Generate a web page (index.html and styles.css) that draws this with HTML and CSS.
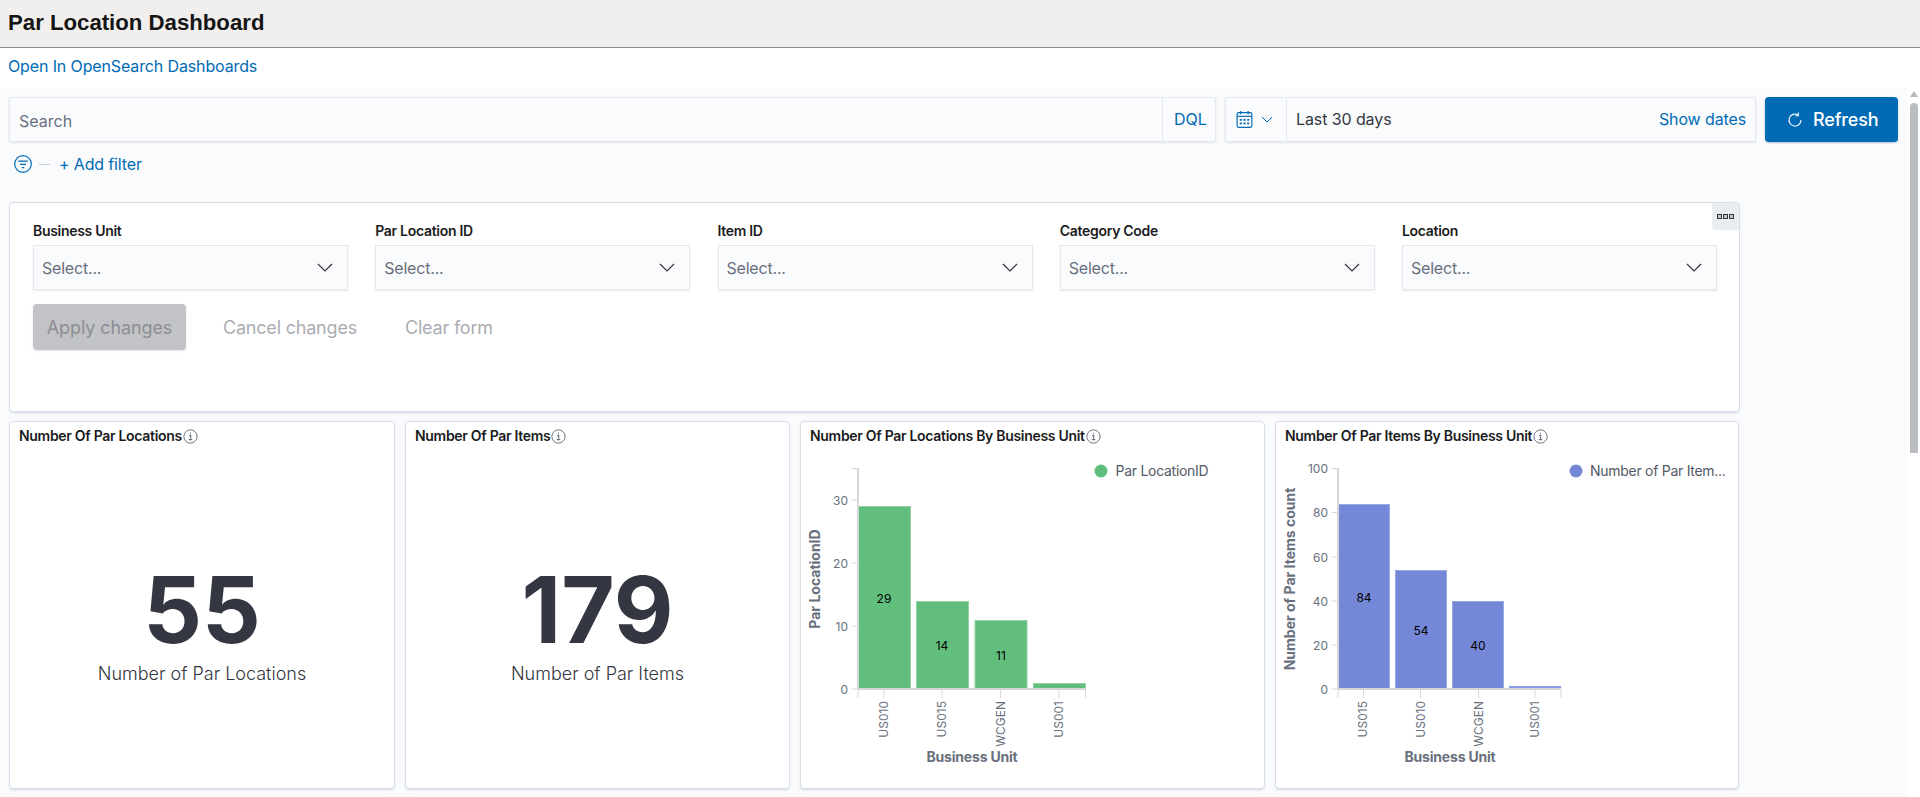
FILE: index.html
```html
<!DOCTYPE html>
<html lang="en">
<head>
<meta charset="utf-8">
<title>Par Location Dashboard</title>
<link rel="stylesheet" href="styles.css">
</head>
<body>
<header class="page-header"><h1 class="page-title">Par Location Dashboard</h1></header>
<div class="link-row"><a class="link" href="#">Open In OpenSearch Dashboards</a></div>
<div class="workspace">
  <main class="main">
    <div class="query-row">
      <div class="search-bar">
        <span class="search-placeholder">Search</span>
        <span class="dql">DQL</span>
      </div>
      <div class="date-picker">
        <div class="date-quick">
          <svg class="icon-cal" viewBox="0 0 16 18" width="17" height="19"><rect x="1" y="2.5" width="14" height="14" rx="1.5" fill="none" stroke="#006bb4" stroke-width="1.1"/><path d="M1 6h14" stroke="#006bb4" stroke-width="1.1"/><path d="M4.5 1v3M11.5 1v3" stroke="#006bb4" stroke-width="1.2"/><path d="M3.5 8.5h2v1.6h-2zM7 8.5h2v1.6H7zM10.5 8.5h2v1.6h-2zM3.5 11.8h2v1.6h-2zM7 11.8h2v1.6H7zM10.5 11.8h2v1.6h-2z" fill="#006bb4"/></svg>
          <svg class="icon-chev-small" viewBox="0 0 12 7" width="12" height="7"><path d="M1 1l5 5 5-5" fill="none" stroke="#006bb4" stroke-width="1"/></svg>
        </div>
        <span class="date-value">Last 30 days</span>
        <span class="show-dates">Show dates</span>
      </div>
      <button class="refresh" type="button">
        <svg viewBox="0 0 16 16" width="16" height="16"><path d="M14 8a6 6 0 1 1-2.9-5.1" fill="none" stroke="#fff" stroke-width="1.1"/><path d="M11.3 .5v3.2H8.3" fill="none" stroke="#fff" stroke-width="1.1"/></svg>
        <span>Refresh</span>
      </button>
    </div>
    <div class="filter-row">
      <svg viewBox="0 0 18 18" width="18" height="18"><circle cx="9" cy="9" r="8.3" fill="none" stroke="#006bb4" stroke-width="1.2"/><path d="M4.2 6.2h9.6M6 9.4h6M7.8 12.6h2.4" stroke="#006bb4" stroke-width="1.2" fill="none"/></svg>
      <span class="filter-dash"></span>
      <a class="link add-filter" href="#">+ Add filter</a>
    </div>

    <section class="panel controls">
      <div class="options-tab"><span class="sq"></span><span class="sq"></span><span class="sq"></span></div>
      <div class="control-grid">
        <div class="control"><label class="control-label">Business Unit</label><div class="select"><span>Select...</span><svg viewBox="0 0 16 9" width="16" height="9"><path d="M1 1l7 7 7-7" fill="none" stroke="#343741" stroke-width="1.2"/></svg></div></div>
        <div class="control"><label class="control-label">Par Location ID</label><div class="select"><span>Select...</span><svg viewBox="0 0 16 9" width="16" height="9"><path d="M1 1l7 7 7-7" fill="none" stroke="#343741" stroke-width="1.2"/></svg></div></div>
        <div class="control"><label class="control-label">Item ID</label><div class="select"><span>Select...</span><svg viewBox="0 0 16 9" width="16" height="9"><path d="M1 1l7 7 7-7" fill="none" stroke="#343741" stroke-width="1.2"/></svg></div></div>
        <div class="control"><label class="control-label">Category Code</label><div class="select"><span>Select...</span><svg viewBox="0 0 16 9" width="16" height="9"><path d="M1 1l7 7 7-7" fill="none" stroke="#343741" stroke-width="1.2"/></svg></div></div>
        <div class="control"><label class="control-label">Location</label><div class="select"><span>Select...</span><svg viewBox="0 0 16 9" width="16" height="9"><path d="M1 1l7 7 7-7" fill="none" stroke="#343741" stroke-width="1.2"/></svg></div></div>
      </div>
      <div class="control-actions">
        <button class="btn-apply" type="button">Apply changes</button>
        <span class="btn-empty cancel">Cancel changes</span>
        <span class="btn-empty clear">Clear form</span>
      </div>
    </section>

    <div class="panel-grid">
      <section class="panel viz">
        <h2 class="viz-title">Number Of Par Locations<svg class="info" viewBox="0 0 14 14" width="15" height="15"><circle cx="7" cy="7" r="6.2" fill="none" stroke="#69707d" stroke-width=".9"/><path d="M5.8 6.2h1.4v3.6M5.4 9.9h3.2M6.9 3.6v1.2" fill="none" stroke="#69707d" stroke-width="1"/></svg></h2>
        <div class="metric"><div class="metric-value">55</div><div class="metric-label">Number of Par Locations</div></div>
      </section>
      <section class="panel viz">
        <h2 class="viz-title">Number Of Par Items<svg class="info" viewBox="0 0 14 14" width="15" height="15"><circle cx="7" cy="7" r="6.2" fill="none" stroke="#69707d" stroke-width=".9"/><path d="M5.8 6.2h1.4v3.6M5.4 9.9h3.2M6.9 3.6v1.2" fill="none" stroke="#69707d" stroke-width="1"/></svg></h2>
        <div class="metric"><div class="metric-value">179</div><div class="metric-label">Number of Par Items</div></div>
      </section>
      <section class="panel viz">
        <h2 class="viz-title">Number Of Par Locations By Business Unit<svg class="info" viewBox="0 0 14 14" width="15" height="15"><circle cx="7" cy="7" r="6.2" fill="none" stroke="#69707d" stroke-width=".9"/><path d="M5.8 6.2h1.4v3.6M5.4 9.9h3.2M6.9 3.6v1.2" fill="none" stroke="#69707d" stroke-width="1"/></svg></h2>
        <svg class="chart" viewBox="801 448 464 340" width="464" height="340">
          <g class="grid-lines">
            <path d="M852 468.5h6M852 500h6M852 563h6M852 626h6M852 689h6"/>
            <path d="M858 698v-9M884 698v-9M942 698v-9M1000.5 698v-9M1059 698v-9M1085.5 698v-9"/>
          </g>
          <rect class="bar green" x="858.5" y="506.5" width="52" height="182"/>
          <rect class="bar green" x="916.5" y="601.5" width="52" height="87"/>
          <rect class="bar green" x="975" y="620.5" width="52" height="68"/>
          <rect class="bar green" x="1033.5" y="683.5" width="52" height="5"/>
          <path class="axis" d="M858 468v221h228"/>
          <text class="tick" x="848" y="504.5" text-anchor="end">30</text>
          <text class="tick" x="848" y="567.5" text-anchor="end">20</text>
          <text class="tick" x="848" y="630.5" text-anchor="end">10</text>
          <text class="tick" x="848" y="693.5" text-anchor="end">0</text>
          <text class="val" x="884" y="603" text-anchor="middle">29</text>
          <text class="val" x="942" y="650" text-anchor="middle">14</text>
          <text class="val" x="1001" y="660" text-anchor="middle">11</text>
          <text class="tick" transform="translate(888 701) rotate(-90)" text-anchor="end">US010</text>
          <text class="tick" transform="translate(946 701) rotate(-90)" text-anchor="end">US015</text>
          <text class="tick" transform="translate(1005 701) rotate(-90)" text-anchor="end">WCGEN</text>
          <text class="tick" transform="translate(1063 701) rotate(-90)" text-anchor="end">US001</text>
          <text class="axis-title x-title" x="972" y="762" text-anchor="middle">Business Unit</text>
          <text class="axis-title" transform="translate(820 579) rotate(-90)" text-anchor="middle">Par LocationID</text>
          <circle class="dot-green" cx="1101" cy="471" r="6.5"/>
          <text class="legend" x="1115.5" y="476">Par LocationID</text>
        </svg>
      </section>
      <section class="panel viz">
        <h2 class="viz-title">Number Of Par Items By Business Unit<svg class="info" viewBox="0 0 14 14" width="15" height="15"><circle cx="7" cy="7" r="6.2" fill="none" stroke="#69707d" stroke-width=".9"/><path d="M5.8 6.2h1.4v3.6M5.4 9.9h3.2M6.9 3.6v1.2" fill="none" stroke="#69707d" stroke-width="1"/></svg></h2>
        <svg class="chart" viewBox="1276 448 463 340" width="463" height="340">
          <g class="grid-lines">
            <path d="M1332 468.5h6M1332 512.5h6M1332 557h6M1332 601h6M1332 645h6M1332 689h6"/>
            <path d="M1338 698v-9M1363.5 698v-9M1420.5 698v-9M1478.5 698v-9M1535 698v-9M1561 698v-9"/>
          </g>
          <rect class="bar blue" x="1338.5" y="504.5" width="51" height="184"/>
          <rect class="bar blue" x="1395.5" y="570.5" width="51" height="118"/>
          <rect class="bar blue" x="1452.5" y="601.5" width="51" height="87"/>
          <rect class="bar-sliver" x="1509" y="686" width="52" height="3"/>
          <path class="axis" d="M1338 468v221h223"/>
          <text class="tick" x="1328" y="473" text-anchor="end">100</text>
          <text class="tick" x="1328" y="517" text-anchor="end">80</text>
          <text class="tick" x="1328" y="561.5" text-anchor="end">60</text>
          <text class="tick" x="1328" y="605.5" text-anchor="end">40</text>
          <text class="tick" x="1328" y="649.5" text-anchor="end">20</text>
          <text class="tick" x="1328" y="693.5" text-anchor="end">0</text>
          <text class="val" x="1364" y="602" text-anchor="middle">84</text>
          <text class="val" x="1421" y="635" text-anchor="middle">54</text>
          <text class="val" x="1478" y="650" text-anchor="middle">40</text>
          <text class="tick" transform="translate(1367 701) rotate(-90)" text-anchor="end">US015</text>
          <text class="tick" transform="translate(1424.5 701) rotate(-90)" text-anchor="end">US010</text>
          <text class="tick" transform="translate(1482.5 701) rotate(-90)" text-anchor="end">WCGEN</text>
          <text class="tick" transform="translate(1539 701) rotate(-90)" text-anchor="end">US001</text>
          <text class="axis-title x-title" x="1450" y="762" text-anchor="middle">Business Unit</text>
          <text class="axis-title" transform="translate(1295 579) rotate(-90)" text-anchor="middle">Number of Par Items count</text>
          <circle class="dot-blue" cx="1576" cy="471" r="6.5"/>
          <text class="legend" x="1590" y="476">Number of Par Item...</text>
        </svg>
      </section>
    </div>
  </main>
  <div class="scrollbar"><span class="scroll-arrow"></span><span class="scroll-thumb"></span></div>
</div>
</body>
</html>
```
FILE: styles.css
```css
* { box-sizing: border-box; }
html, body { margin: 0; height: 100%; overflow: hidden; }
body {
  display: flex;
  flex-direction: column;
  background: #fff;
  font-family: Inter, "Liberation Sans", sans-serif;
  color: #343741;
}
.page-header {
  height: 48px;
  flex: none;
  background: #f1efed;
  border-bottom: 1px solid #8b8b8b;
  padding-left: 8px;
  display: flex;
  align-items: center;
}
.page-title {
  margin: 0 0 1px;
  font: 700 22.2px/1 "Liberation Sans", Arial, sans-serif;
  color: #151515;
}
.link-row {
  height: 40px;
  flex: none;
  padding: 0 8px 4px;
  display: flex;
  align-items: center;
  font-size: 16px;
  letter-spacing: -.13px;
}
.link { color: #006bb4; text-decoration: none; }
.workspace { flex: 1; min-height: 0; display: flex; }
.main {
  width: 1907px;
  flex: none;
  background: #fafbfd;
  padding: 9px 9px 0;
}
.scrollbar {
  flex: 1;
  background: #fff;
  padding: 3px 2px 0 3px;
  display: flex;
  flex-direction: column;
  align-items: center;
}
.scroll-arrow {
  width: 0;
  height: 0;
  border-left: 4px solid transparent;
  border-right: 4px solid transparent;
  border-bottom: 6px solid #b5b8bd;
  margin-bottom: 6px;
}
.scroll-thumb {
  width: 8px;
  height: 350px;
  background: #b9bcc1;
  border-radius: 4px 4px 0 0;
}
.query-row { display: flex; gap: 9px; height: 45px; }
.search-bar, .date-picker, .select {
  background: #fafbfd;
  border: 1px solid #e4e7ee;
  box-shadow: 0 1px 2px rgba(152, 162, 179, .25);
}
.search-bar {
  flex: 1;
  display: flex;
  align-items: center;
  justify-content: space-between;
  padding-left: 9px;
  border-radius: 2px;
}
.search-placeholder { font-size: 16px; color: #69707d; margin-top: 2px; }
.dql {
  height: 100%;
  width: 53px;
  border-left: 1px solid #e4e7ee;
  display: flex;
  align-items: center;
  padding: 0 0 1px 11px;
  font-size: 16px;
  color: #006bb4;
}
.date-picker {
  width: 531px;
  flex: none;
  display: flex;
  align-items: center;
  padding-right: 9px;
  font-size: 16px;
  border-radius: 2px;
}
.date-quick {
  width: 61px;
  height: 100%;
  flex: none;
  display: flex;
  align-items: center;
  gap: 8px;
  padding-left: 10px;
  border-right: 1px solid #e4e7ee;
}
.date-value { margin: 0 0 1px 9px; flex: 1; letter-spacing: -.1px; }
.show-dates { color: #006bb4; margin-bottom: 1px; letter-spacing: -.12px; }
.refresh {
  width: 133px;
  flex: none;
  background: #006bb4;
  color: #fff;
  border: 0;
  border-radius: 4px;
  font: 500 18px Inter, "Liberation Sans", sans-serif;
  letter-spacing: -.15px;
  display: flex;
  align-items: center;
  padding: 0 0 0 22px;
  gap: 10px;
  box-shadow: 0 1px 2px rgba(0, 60, 120, .3);
}
.filter-row {
  height: 44px;
  display: flex;
  align-items: center;
  padding-left: 5px;
  font-size: 16px;
  letter-spacing: -.15px;
}
.filter-dash { width: 11px; height: 1px; background: #c8d0dc; margin: 0 9px 0 7px; }
.panel {
  background: #fff;
  border: 1px solid #d9deea;
  border-radius: 4px;
  box-shadow: 0 2px 2px -1px rgba(152, 162, 179, .3), 0 1px 4px -1px rgba(152, 162, 179, .2);
}
.controls {
  position: relative;
  margin-top: 16px;
  width: 1731px;
  height: 210px;
  padding: 19px 0 0 23px;
}
.options-tab {
  position: absolute;
  top: 0;
  right: 0;
  width: 27px;
  height: 27px;
  background: #e9edf0;
  border-radius: 0 4px 0 4px;
  display: flex;
  align-items: center;
  justify-content: center;
  gap: 1px;
}
.sq { width: 5px; height: 5px; border: 1px solid #343741; background: #c4c7cc; }
.control-grid { display: grid; grid-template-columns: repeat(5, 315px); column-gap: 27.25px; }
.control-label {
  display: block;
  height: 23px;
  font-size: 14px;
  font-weight: 600;
  line-height: 17px;
  letter-spacing: -.3px;
  color: #1a1c21;
}
.select {
  height: 45px;
  display: flex;
  align-items: center;
  justify-content: space-between;
  padding: 0 14px 0 8px;
  font-size: 16px;
  letter-spacing: -.2px;
  color: #69707d;
}
.control-actions { display: flex; align-items: center; margin-top: 14px; font-size: 18px; letter-spacing: -.2px; }
.btn-apply {
  width: 153px;
  height: 46px;
  background: #c2c3c6;
  color: #8d8e94;
  border: 0;
  border-radius: 4px;
  font: 400 18px Inter, "Liberation Sans", sans-serif;
  letter-spacing: -.1px;
  padding: 0;
  box-shadow: 0 1px 2px rgba(152, 162, 179, .3);
}
.btn-empty { color: #abadb2; }
.cancel { margin-left: 37px; }
.clear { margin-left: 48px; }
.panel-grid {
  display: grid;
  grid-template-columns: 386px 385px 465px 464px;
  column-gap: 10px;
  margin-top: 9px;
}
.viz { height: 368px; display: flex; flex-direction: column; overflow: hidden; }
.viz-title {
  margin: 0;
  height: 26px;
  padding: 1px 0 0 9px;
  display: flex;
  align-items: center;
  gap: 1px;
  font-size: 14px;
  font-weight: 600;
  line-height: 17px;
  letter-spacing: -.3px;
  color: #1a1c21;
}
.info { flex: none; margin-top: 1px; }
.metric {
  flex: 1;
  display: flex;
  flex-direction: column;
  align-items: center;
  padding-top: 116px;
}
.metric-value {
  font: 700 92px/1 Inter, "Liberation Sans", sans-serif;
  color: #343741;
}
.metric-label { font-size: 18px; font-weight: 300; line-height: 22px; margin-top: 7px; color: #343741; }
.chart { display: block; flex: none; }
.grid-lines path { fill: none; stroke: #d9d9d9; stroke-width: 1; }
.axis { fill: none; stroke: #d6d6d8; stroke-width: 2; }
.bar { stroke-width: 1; }
.green { fill: #62be7c; stroke: #93d2a4; }
.blue { fill: #7587d7; stroke: #9aa8e2; }
.bar-sliver { fill: #8d9be0; }
.dot-green { fill: #62be7c; }
.dot-blue { fill: #7587d7; }
.tick { font: 400 12px Inter, "Liberation Sans", sans-serif; fill: #69707d; }
.val { font: 400 12px Inter, "Liberation Sans", sans-serif; fill: #000; }
.axis-title { font: 700 14px Inter, "Liberation Sans", sans-serif; fill: #69707d; }
.x-title { letter-spacing: -.2px; }
.legend { font: 400 14px Inter, "Liberation Sans", sans-serif; letter-spacing: -.28px; fill: #535966; }
```
